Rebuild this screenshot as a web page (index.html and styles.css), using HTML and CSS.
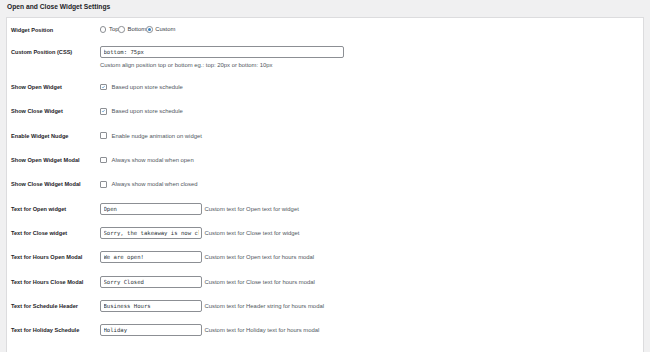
FILE: index.html
```html
<!doctype html>
<html>
<head>
<title>Open and Close Widget Settings</title>
<link rel="stylesheet" href="styles.css">
</head>
<body>
<h2 class="title">Open and Close Widget Settings</h2>
<section class="panel">

<div class="row first">
<div class="label">Widget Position</div>
<div class="field radios">
<label class="opt"><span class="radio"></span>Top</label><label class="opt"><span class="radio"></span>Bottom</label> <label class="opt"><span class="radio on"></span>Custom</label>
</div>
</div>

<div class="row tall">
<div class="label">Custom Position (CSS)</div>
<div class="field stack">
<input class="text wide" type="text" value="bottom: 75px">
<p class="desc">Custom align position top or bottom eg.: top: 20px or bottom: 10px</p>
</div>
</div>

<div class="row">
<div class="label">Show Open Widget</div>
<div class="field"><label class="check"><span class="box on"><svg viewBox="0 0 10 10"><path d="M2.2 5.2 L4.2 7.2 L8 2.6" /></svg></span>Based upon store schedule</label></div>
</div>

<div class="row">
<div class="label">Show Close Widget</div>
<div class="field"><label class="check"><span class="box on"><svg viewBox="0 0 10 10"><path d="M2.2 5.2 L4.2 7.2 L8 2.6" /></svg></span>Based upon store schedule</label></div>
</div>

<div class="row">
<div class="label">Enable Widget Nudge</div>
<div class="field"><label class="check"><span class="box"></span>Enable nudge animation on widget</label></div>
</div>

<div class="row">
<div class="label">Show Open Widget Modal</div>
<div class="field"><label class="check"><span class="box"></span>Always show modal when open</label></div>
</div>

<div class="row">
<div class="label">Show Close Widget Modal</div>
<div class="field"><label class="check"><span class="box"></span>Always show modal when closed</label></div>
</div>

<div class="row">
<div class="label">Text for Open widget</div>
<div class="field"><input class="text" type="text" value="Open"><span class="note">Custom text for Open text for widget</span></div>
</div>

<div class="row">
<div class="label">Text for Close widget</div>
<div class="field"><input class="text" type="text" value="Sorry, the takeaway is now closed"><span class="note">Custom text for Close text for widget</span></div>
</div>

<div class="row">
<div class="label">Text for Hours Open Modal</div>
<div class="field"><input class="text" type="text" value="We are open!"><span class="note">Custom text for Open text for hours modal</span></div>
</div>

<div class="row">
<div class="label">Text for Hours Close Modal</div>
<div class="field"><input class="text" type="text" value="Sorry Closed"><span class="note">Custom text for Close text for hours modal</span></div>
</div>

<div class="row">
<div class="label">Text for Schedule Header</div>
<div class="field"><input class="text" type="text" value="Business Hours"><span class="note">Custom text for Header string for hours modal</span></div>
</div>

<div class="row">
<div class="label">Text for Holiday Schedule</div>
<div class="field"><input class="text" type="text" value="Holiday"><span class="note">Custom text for Holiday text for hours modal</span></div>
</div>

</section>
</body>
</html>
```

FILE: styles.css
```css
body {
	margin : 0;
	background : #f0f0f1;
	font-family : "Liberation Sans", Arial, sans-serif;
	color : #1d2327;
}
.title {
	margin : 0;
	height : 17px;
	line-height : 14px;
	padding-left : 7px;
	font-size : 6.7px;
	font-weight : 700;
	color : #1d2327;
}
.panel {
	margin : 0 6px;
	background : #fff;
	border : 1px solid #dcdcde;
	padding : 0 4px 24px 4px;
}
.row {
	display : grid;
	grid-template-columns : 89px 1fr;
	align-items : center;
	height : 24.3px;
}
.row.first {
	height : 23px;
}
.row.tall {
	height : 34px;
	align-items : start;
	padding-top : 5px;
	box-sizing : border-box;
}
.row.tall .label {
	line-height : 12px;
}
.label {
	font-size : 5.6px;
	font-weight : 700;
	color : #1d2327;
}
.field {
	display : flex;
	align-items : center;
	font-size : 5.9px;
	color : #50575e;
}
.field.stack {
	flex-direction : column;
	align-items : flex-start;
}
.opt {
	display : inline-flex;
	align-items : center;
	color : #3c434a;
}
.radio {
	width : 6.4px;
	height : 6.4px;
	box-sizing : border-box;
	border : 0.8px solid #8c8f94;
	border-radius : 50%;
	margin-right : 2.6px;
	display : flex;
	align-items : center;
	justify-content : center;
}
.radio.on::after {
	content : "";
	width : 3px;
	height : 3px;
	border-radius : 50%;
	background : #3582c4;
}
.check {
	display : inline-flex;
	align-items : center;
	color : #50575e;
}
.box {
	width : 6.7px;
	height : 6.7px;
	box-sizing : border-box;
	border : 0.8px solid #8c8f94;
	border-radius : 1px;
	margin-right : 4.8px;
	display : flex;
	align-items : center;
	justify-content : center;
}
.box svg {
	width : 6px;
	height : 6px;
	fill : none;
	stroke : #3582c4;
	stroke-width : 1.3;
}
.text {
	height : 12px;
	width : 102px;
	box-sizing : border-box;
	border : 0.8px solid #8c8f94;
	border-radius : 2px;
	padding : 0 2.5px;
	margin : 0;
	font-family : "DejaVu Sans Mono", "Liberation Mono", monospace;
	font-size : 5.6px;
	color : #2c3338;
	background : #fff;
	outline : none;
}
.text.wide {
	width : 244px;
}
.desc {
	margin : 4px 0 0 0;
	line-height : 7px;
	font-size : 5.9px;
	color : #50575e;
}
.note {
	margin-left : 2.5px;
	color : #50575e;
}
```
